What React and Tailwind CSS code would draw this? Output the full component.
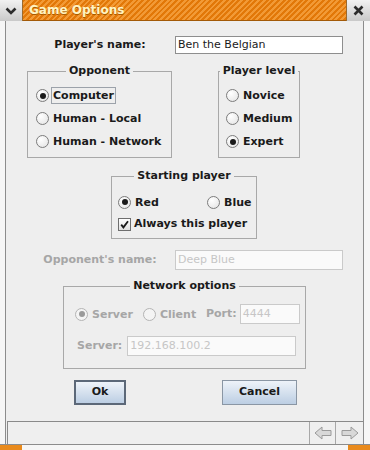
import React from "react";

const font = { fontFamily: '"DejaVu Sans", "Liberation Sans", sans-serif' };

function Radio({ checked, disabled }) {
    return (
        <span
            className={
                "flex h-[13px] w-[13px] shrink-0 items-center justify-center rounded-full border " +
                (disabled
                    ? "border-[#b4b4b4] bg-[#f4f4f4]"
                    : "border-[#7c7c7c] bg-[radial-gradient(circle_at_35%_30%,#ffffff,#e2e2e2)]")
            }
        >
            {checked && (
                <span className={"h-[6px] w-[6px] rounded-full " + (disabled ? "bg-[#9a9a9a]" : "bg-[#1a1a1a]")} />
            )}
        </span>
    );
}

function Option({ label, checked, disabled, focus, className = "" }) {
    return (
        <div className={"flex items-center " + className}>
            <Radio checked={checked} disabled={disabled} />
            <span
                className={
                    "ml-[2px] px-[1px] leading-[15px] font-bold " +
                    (focus ? "border border-[#9ca2aa] " : "border border-transparent ") +
                    (disabled ? "text-[#a6a6a6]" : "text-[#1a1a1a]")
                }
            >
                {label}
            </span>
        </div>
    );
}

function Group({ title, className = "", children }) {
    return (
        <div className={"flex flex-col border border-[#a8a8a8] " + className}>
            <div className="-mt-[8px] h-[14px] self-center bg-[#eeeeee] px-[3px] font-bold leading-[14px] text-[#1a1a1a]">
                {title}
            </div>
            {children}
        </div>
    );
}

export default function App() {
    return (
        <div className="flex h-[450px] w-[370px] flex-col overflow-hidden bg-[#f6f6f6] text-[11px]" style={font}>
            {/* title bar */}
            <div className="flex h-[21px] shrink-0">
                <div className="flex w-[23px] items-center justify-center border-r border-[#9a6a30] bg-[linear-gradient(#f2f2f2,#c9c9c9)]">
                    <svg width="12" height="8" viewBox="0 0 12 8">
                        <polyline points="1.5,1.5 6,6 10.5,1.5" fill="none" stroke="#2c2c2c" strokeWidth="2.6" />
                    </svg>
                </div>
                <div className="flex flex-1 items-center border-b border-[#a35a08] bg-[repeating-linear-gradient(135deg,#e27808_0px,#e27808_2px,#f29a36_2px,#f29a36_4px)] pl-[6px]">
                    <span className="font-bold text-[12px] text-[#fff3c2] [text-shadow:0_1px_0_#a85a00]">Game Options</span>
                </div>
                <div className="flex w-[24px] items-center justify-center border-l border-[#9a6a30] bg-[linear-gradient(#f2f2f2,#c9c9c9)]">
                    <svg width="11" height="11" viewBox="0 0 11 11">
                        <path d="M1.5 1.5 L9.5 9.5 M9.5 1.5 L1.5 9.5" stroke="#2c2c2c" strokeWidth="2.6" />
                    </svg>
                </div>
            </div>

            {/* body */}
            <div className="ml-[5px] flex h-[423px] w-[359px] shrink-0 flex-col border-x border-[#8c8c8c] bg-[#eeeeee] pt-[15px]">
                <div className="flex h-[18px] items-center">
                    <div className="ml-[19px] w-[150px] text-center font-bold text-[#1a1a1a]">Player's name:</div>
                    <div className="flex h-[18px] w-[168px] items-center border border-[#8e8e8e] bg-white pl-[2px] text-[#1a1a1a]">
                        Ben the Belgian
                    </div>
                </div>

                <div className="mt-[17px] flex">
                    <Group title="Opponent" className="ml-[21px] h-[87px] w-[145px]">
                        <div className="flex flex-col pl-[8px] pt-[6px]">
                            <Option label="Computer" checked focus className="h-[23px]" />
                            <Option label="Human - Local" className="h-[23px]" />
                            <Option label="Human - Network" className="h-[23px]" />
                        </div>
                    </Group>
                    <Group title="Player level" className="ml-[46px] h-[87px] w-[82px]">
                        <div className="flex flex-col pl-[7px] pt-[6px]">
                            <Option label="Novice" className="h-[23px]" />
                            <Option label="Medium" className="h-[23px]" />
                            <Option label="Expert" checked className="h-[23px]" />
                        </div>
                    </Group>
                </div>

                <Group title="Starting player" className="ml-[105px] mt-[18px] h-[63px] w-[146px]">
                    <div className="flex flex-col pl-[6px] pt-[8px]">
                        <div className="flex h-[22px] items-center">
                            <Option label="Red" checked className="w-[89px]" />
                            <Option label="Blue" />
                        </div>
                        <div className="flex h-[22px] items-center">
                            <span className="flex h-[13px] w-[13px] items-center justify-center border border-[#6e6e6e] bg-[linear-gradient(#ffffff,#e0e0e0)]">
                                <svg width="9" height="9" viewBox="0 0 9 9">
                                    <path d="M1.2 4.6 L3.4 7.4 L8 1.2" fill="none" stroke="#1a1a1a" strokeWidth="1.8" />
                                </svg>
                            </span>
                            <span className="ml-[3px] font-bold text-[#1a1a1a]">Always this player</span>
                        </div>
                    </div>
                </Group>

                <div className="mt-[11px] flex h-[20px] items-center">
                    <div className="ml-[19px] w-[150px] text-center font-bold text-[#a6a6a6]">Opponent's name:</div>
                    <div className="flex h-[20px] w-[168px] items-center border border-[#cacaca] bg-[#fafafa] pl-[2px] text-[#c6c6c6]">
                        Deep Blue
                    </div>
                </div>

                <Group title="Network options" className="ml-[57px] mt-[16px] h-[83px] w-[243px]">
                    <div className="flex flex-col pl-[11px] pt-[5px]">
                        <div className="flex h-[32px] items-center">
                            <Option label="Server" checked disabled className="w-[68px]" />
                            <Option label="Client" disabled className="w-[63px]" />
                            <span className="font-bold text-[#a6a6a6]">Port:</span>
                            <div className="ml-[3px] flex h-[20px] w-[60px] items-center border border-[#cacaca] bg-[#fafafa] pl-[2px] text-[#c6c6c6]">
                                4444
                            </div>
                        </div>
                        <div className="flex h-[32px] items-center">
                            <span className="ml-[2px] font-bold text-[#a6a6a6]">Server:</span>
                            <div className="ml-[5px] flex h-[20px] w-[169px] items-center border border-[#cacaca] bg-[#fafafa] pl-[2px] text-[#c6c6c6]">
                                192.168.100.2
                            </div>
                        </div>
                    </div>
                </Group>

                <div className="mt-[11px] flex h-[25px]">
                    <button className="ml-[68px] flex h-[25px] w-[52px] items-center justify-center border-2 border-[#5c6878] bg-[linear-gradient(#eef3f9,#bccee3)] font-bold text-[#1a1a1a]">
                        Ok
                    </button>
                    <button className="ml-[96px] flex h-[25px] w-[75px] items-center justify-center border border-[#8a96a4] bg-[linear-gradient(#eef3f9,#bccee3)] font-bold text-[#1a1a1a]">
                        Cancel
                    </button>
                </div>

                <div className="ml-[1px] mt-[16px] flex h-[23px] w-[356px] border-l border-t border-[#8a8a8a] bg-[#efefef]">
                    <div className="flex-1" />
                    <div className="flex w-[27px] items-center justify-center border-l border-r border-[#a8a8a8]">
                        <svg width="18" height="14" viewBox="0 0 18 14">
                            <path d="M1 7 L8 1 L8 4.5 L17 4.5 L17 9.5 L8 9.5 L8 13 Z" fill="#d8d8d8" stroke="#9a9a9a" strokeWidth="1" />
                        </svg>
                    </div>
                    <div className="flex w-[27px] items-center justify-center">
                        <svg width="18" height="14" viewBox="0 0 18 14">
                            <path d="M17 7 L10 1 L10 4.5 L1 4.5 L1 9.5 L10 9.5 L10 13 Z" fill="#d8d8d8" stroke="#9a9a9a" strokeWidth="1" />
                        </svg>
                    </div>
                </div>
            </div>

            {/* bottom frame */}
            <div className="flex h-[6px] border-t border-[#8c8c8c]">
                <div className="w-[22px] bg-[#e98a1c]" />
                <div className="flex-1" />
                <div className="w-[22px] bg-[#e98a1c]" />
            </div>
        </div>
    );
}
